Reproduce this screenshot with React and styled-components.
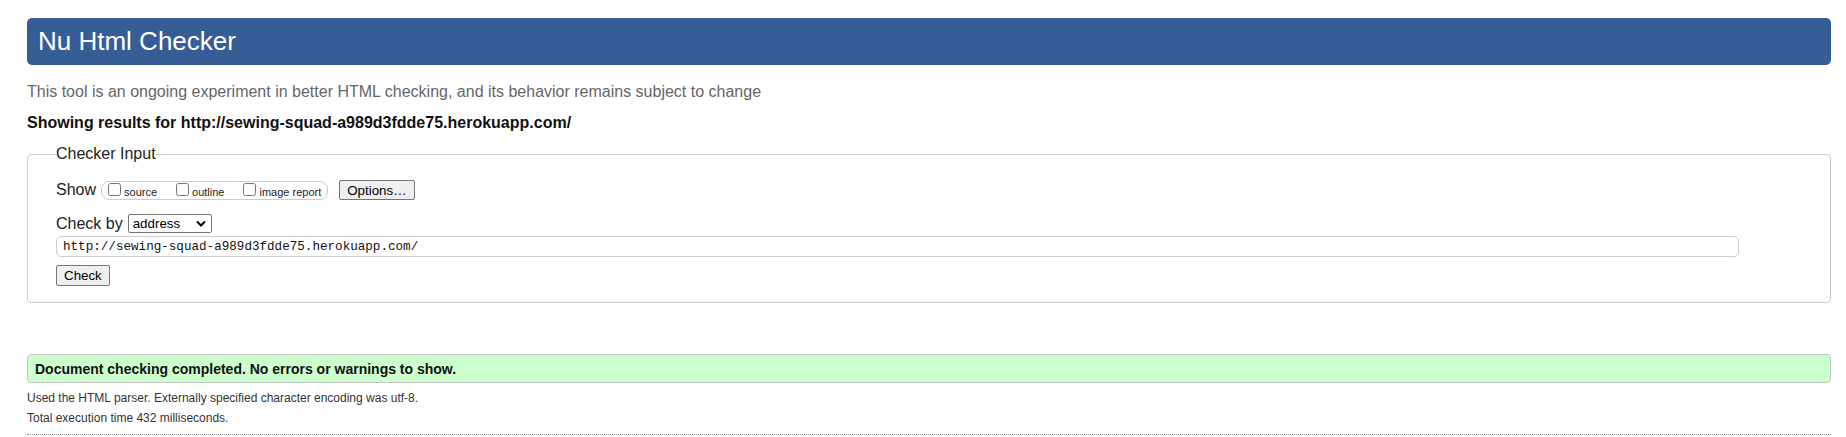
import React from 'react'
import styled, { createGlobalStyle } from 'styled-components'

const GlobalStyle = createGlobalStyle`
    body {
        margin: 0;
        background: #ffffff;
        font-family: "Liberation Sans", Arial, sans-serif;
        color: #222222;
    }
`

const Page = styled.div`
    padding: 18px 15px 0 27px;
`

const Header = styled.header`
    height: 47px;
    background: #365d96;
    border-radius: 5px;
    padding-left: 11px;
    display: flex;
    align-items: center;
`

const Title = styled.h1`
    margin: 0;
    font-size: 26px;
    font-weight: normal;
    line-height: 47px;
    color: #ffffff;
`

const Intro = styled.p`
    margin: 18px 0 0;
    font-size: 16px;
    line-height: 18px;
    color: #666666;
`

const ResultsFor = styled.p`
    margin: 13px 0 0;
    font-size: 16px;
    line-height: 18px;
    font-weight: bold;
    color: #111111;
`

const Fieldset = styled.fieldset`
    margin: 13px 0 0;
    min-width: 0;
    padding: 0 0 16px 28px;
    border: 1px solid #cccccc;
    border-radius: 4px;
`

const Legend = styled.legend`
    padding: 0;
    font-size: 16px;
    line-height: 18px;
    color: #222222;
`

const Row = styled.div`
    display: flex;
    align-items: center;
    height: ${props => props.height}px;
    margin-top: ${props => props.gap}px;
`

const RowLabel = styled.span`
    font-size: 16px;
    line-height: 18px;
    color: #222222;
    margin-right: ${props => props.space}px;
`

const OptionGroup = styled.div`
    display: flex;
    align-items: flex-end;
    box-sizing: border-box;
    height: 19px;
    padding: 0 6px 3px 6px;
    border: 1px solid #cccccc;
    border-radius: 8px;
    gap: 19px;
`

const OptionLabel = styled.label`
    display: flex;
    align-items: flex-end;
    gap: 3px;
`

const Box = styled.input`
    width: 13px;
    height: 13px;
    margin: 0;
`

const OptionText = styled.span`
    font-size: 11px;
    line-height: 11px;
    margin-bottom: -2px;
    color: #222222;
`

const Button = styled.button`
    box-sizing: border-box;
    height: ${props => props.h}px;
    margin-left: ${props => props.offset || 0}px;
    padding: 0 7px;
    background: #efefef;
    border: 1px solid #767676;
    border-radius: 2px;
    font-family: "Liberation Sans", Arial, sans-serif;
    font-size: 13.33px;
    color: #000000;
`

const SelectWrap = styled.div`
    position: relative;
    display: flex;
`

const Select = styled.select`
    appearance: none;
    box-sizing: border-box;
    width: 84px;
    height: 19px;
    margin: 0;
    padding: 0 0 0 4px;
    background: #ffffff;
    border: 1px solid #767676;
    border-radius: 2px;
    font-family: "Liberation Sans", Arial, sans-serif;
    font-size: 13.33px;
    color: #000000;
`

const Chevron = styled.svg`
    position: absolute;
    right: 6px;
    top: 6px;
    pointer-events: none;
`

const UrlInput = styled.input`
    box-sizing: border-box;
    width: 1683px;
    height: 21px;
    margin: 0;
    padding: 0 6px;
    border: 1px solid #cccccc;
    border-radius: 5px;
    font-family: "Liberation Mono", "DejaVu Sans Mono", monospace;
    font-size: 12.6px;
    color: #111111;
    outline: none;
`

const Success = styled.div`
    margin-top: 51px;
    height: 29px;
    box-sizing: border-box;
    padding: 1px 7px 0;
    background: #ccffcc;
    border: 1px solid #c4c4c4;
    border-radius: 4px;
    font-size: 14px;
    line-height: 26px;
    font-weight: bold;
    color: #111111;
`

const Details = styled.div`
    margin-top: 5px;
    padding-bottom: 6px;
    border-bottom: 1px dotted #888888;
`

const Note = styled.p`
    margin: 0;
    font-size: 12px;
    line-height: 20px;
    color: #333333;
`

const options = ['source', 'outline', 'image report']

export default function App() {
    return (
        <Page>
            <GlobalStyle />
            <Header>
                <Title>Nu Html Checker</Title>
            </Header>
            <Intro>This tool is an ongoing experiment in better HTML checking, and its behavior remains subject to change</Intro>
            <ResultsFor>Showing results for http://sewing-squad-a989d3fdde75.herokuapp.com/</ResultsFor>

            <Fieldset>
                <Legend>Checker Input</Legend>
                <Row height={20} gap={17}>
                    <RowLabel space={5}>Show</RowLabel>
                    <OptionGroup>
                        {options.map(o => (
                            <OptionLabel key={o}>
                                <Box type='checkbox' />
                                <OptionText>{o}</OptionText>
                            </OptionLabel>
                        ))}
                    </OptionGroup>
                    <Button h={20} offset={11}>Options…</Button>
                </Row>
                <Row height={19} gap={14}>
                    <RowLabel space={5}>Check by</RowLabel>
                    <SelectWrap>
                        <Select defaultValue='address'>
                            <option value='address'>address</option>
                            <option value='file'>file upload</option>
                            <option value='textarea'>text input</option>
                        </Select>
                        <Chevron width='10' height='7' viewBox='0 0 10 7'>
                            <polyline points='1,1.5 5,5.5 9,1.5' fill='none' stroke='#000' strokeWidth='2' />
                        </Chevron>
                    </SelectWrap>
                </Row>
                <Row height={21} gap={3}>
                    <UrlInput type='url' defaultValue='http://sewing-squad-a989d3fdde75.herokuapp.com/' />
                </Row>
                <Row height={21} gap={8}>
                    <Button h={21}>Check</Button>
                </Row>
            </Fieldset>

            <Success>Document checking completed. No errors or warnings to show.</Success>
            <Details>
                <Note>Used the HTML parser. Externally specified character encoding was utf-8.</Note>
                <Note>Total execution time 432 milliseconds.</Note>
            </Details>
        </Page>
    )
}
